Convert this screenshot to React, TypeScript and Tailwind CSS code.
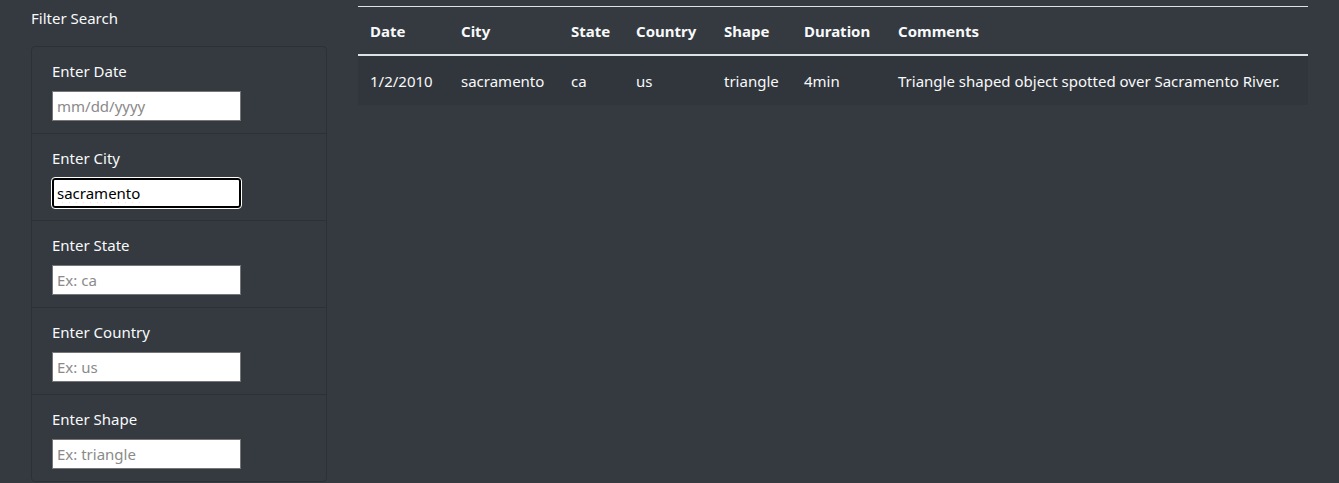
import React from "react";

const fields = [
  { label: "Enter Date", placeholder: "mm/dd/yyyy" },
  { label: "Enter City", value: "sacramento" },
  { label: "Enter State", placeholder: "Ex: ca" },
  { label: "Enter Country", placeholder: "Ex: us" },
  { label: "Enter Shape", placeholder: "Ex: triangle" },
];

const cols = [
  { name: "Date", w: "w-[91px]" },
  { name: "City", w: "w-[110px]" },
  { name: "State", w: "w-[65px]" },
  { name: "Country", w: "w-[88px]" },
  { name: "Shape", w: "w-[80px]" },
  { name: "Duration", w: "w-[94px]" },
  { name: "Comments", w: "" },
];

const row = ["1/2/2010", "sacramento", "ca", "us", "triangle", "4min", "Triangle shaped object spotted over Sacramento River."];

export default function App() {
  return (
    <div className="w-[1339px] h-[483px] overflow-hidden bg-[#343a40] text-[#f8f9fa] flex pl-[31px] pr-[31px] gap-[31px] font-['Segoe_UI','Noto_Sans',sans-serif]">
      <aside className="w-[296px] shrink-0 flex flex-col">
        <div className="h-[46px] pt-[8px] text-[15px] leading-[20px]">Filter Search</div>
        <ul className="border border-[#2c3136] rounded-[4px] flex flex-col">
          {fields.map((f, i) => (
            <li
              key={f.label}
              className={`px-[20px] pt-[13px] flex flex-col ${i > 0 ? "h-[87px] border-t border-[#2c3136]" : "h-[86px]"}`}
            >
              <label className="text-[15px] leading-[22px] h-[31px]">{f.label}</label>
              {f.value ? (
                <input
                  defaultValue={f.value}
                  spellCheck={false}
                  className="w-[189px] h-[30px] bg-white text-black text-[15px] px-[3px] rounded-[3px] border-2 border-black outline outline-1 outline-white underline decoration-wavy decoration-red-500 decoration-1 underline-offset-[3px]"
                />
              ) : (
                <input
                  placeholder={f.placeholder}
                  className="w-[189px] h-[30px] bg-white text-black text-[15px] px-[4px] border border-[#767676] placeholder:text-[#8a8a8a]"
                />
              )}
            </li>
          ))}
        </ul>
      </aside>
      <main className="w-[950px] shrink-0 pt-[6px]">
        <table className="w-full border-collapse text-[15px]">
          <thead>
            <tr className="border-t border-[#dee2e6] border-b-2 border-b-[#dee2e6]">
              {cols.map((c) => (
                <th key={c.name} className={`${c.w} text-left font-bold px-[12px] pt-[1px] h-[48px] align-middle`}>
                  {c.name}
                </th>
              ))}
            </tr>
          </thead>
          <tbody>
            <tr className="bg-[#31363c]">
              {row.map((v, i) => (
                <td key={i} className="px-[12px] pt-[2px] h-[50px] align-middle whitespace-nowrap">
                  {v}
                </td>
              ))}
            </tr>
          </tbody>
        </table>
      </main>
    </div>
  );
}
